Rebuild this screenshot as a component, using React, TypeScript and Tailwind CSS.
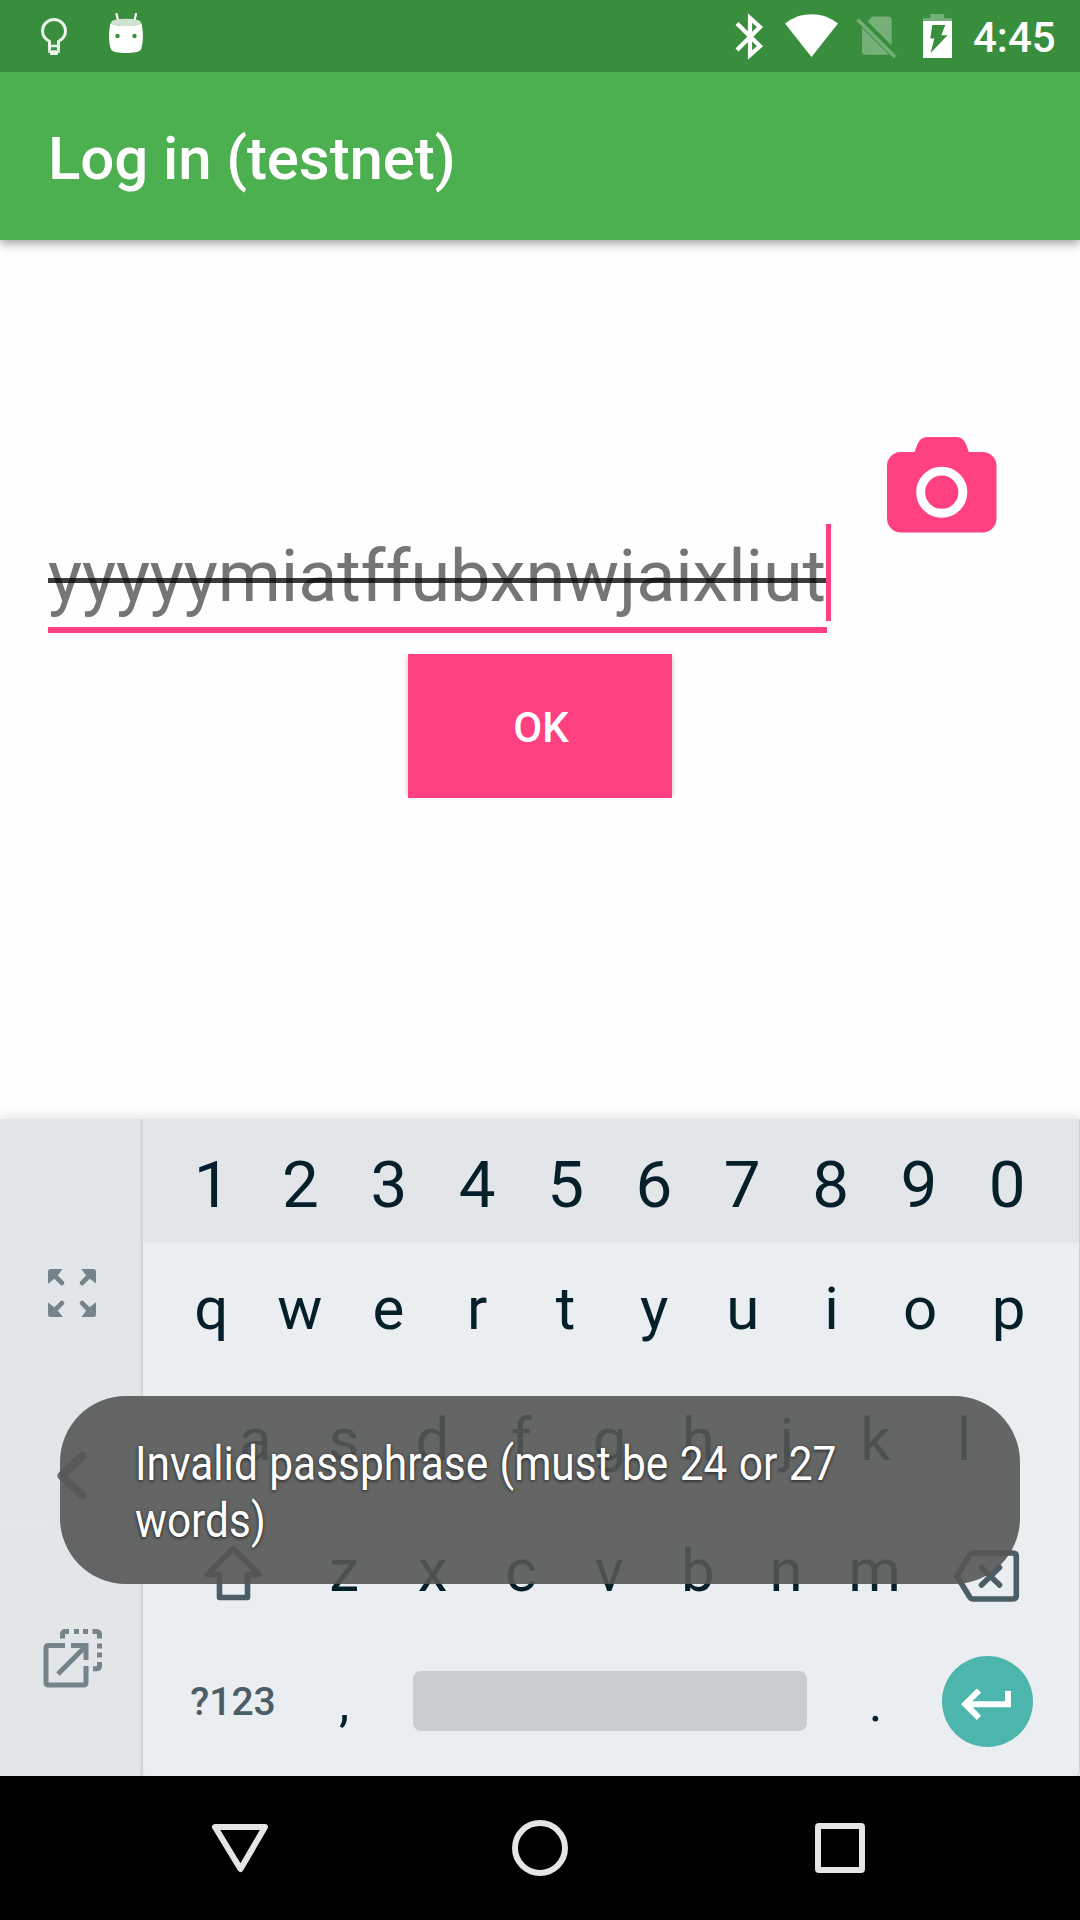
import React from "react";

const NUMBERS = "1234567890".split("");
const TOP = "qwertyuiop".split("");
const HOME = "asdfghjkl".split("");
const BOTTOM = "zxcvbnm".split("");

function StatusBar() {
  return (
    <div className="flex h-[72px] items-start bg-[#388e3c]">
      <svg className="ml-[36px] h-[72px] w-[36px]" viewBox="36 0 36 72" fill="none">
        <path d="M49.500 50V41.500C45 39 42.500 35.500 42.500 31a11.500 11.500 0 0 1 23 0c0 4.500-2.500 8-7 10.500V50" stroke="#e8f2e8" strokeWidth="3" />
        <path d="M49 46h10M48 51.500h12" stroke="#e8f2e8" strokeWidth="2.600" />
        <path d="M50 51h8v4h-8z" fill="#e8f2e8" />
      </svg>
      <svg className="ml-[32px] h-[72px] w-[44px]" viewBox="104 0 44 72">
        <path d="M116.500 14l2 8M136 14l-2 8" stroke="#fff" strokeWidth="2.200" strokeLinecap="round" />
        <path d="M110.500 23C114 27 138 27 141.500 23C143.500 32 143.500 42 141 49.500C139 54.200 113 54.200 111 49.500C108.500 42 108.500 32 110.500 23z" fill="#fff" />
        <ellipse cx="126" cy="22.500" rx="15" ry="3.800" fill="#cfe3d0" />
        <circle cx="117.500" cy="36" r="2.200" fill="#388e3c" />
        <circle cx="134.500" cy="36" r="2.200" fill="#388e3c" />
      </svg>
      <svg className="ml-auto h-[72px] w-[32px]" viewBox="733 0 32 72" fill="none">
        <path d="M737 23.500L760 46.200L750 55V18L760 27L737 50" stroke="#fff" strokeWidth="4.200" strokeMiterlimit="3" />
      </svg>
      <svg className="ml-[18px] h-[72px] w-[58px]" viewBox="783 0 58 72">
        <path d="M811.500 57L785 23.500C800 11 823 11 838 23.500z" fill="#fff" />
      </svg>
      <svg className="ml-[12px] h-[72px] w-[46px]" viewBox="853 0 46 72" fill="#76b079">
        <path d="M867.500 21.500L872.500 16.500H888.500Q891.700 16.500 891.700 20V45.500z" />
        <path d="M862 27.500V51.500Q862 54.700 865.500 54.700H889.300z" />
        <path d="M857.500 19.500L895 57" stroke="#76b079" strokeWidth="3.400" />
      </svg>
      <svg className="ml-[21px] h-[72px] w-[35px]" viewBox="920 0 35 72">
        <path d="M930.300 14h14v4.300h7.700v3H923v-3h7.300z" fill="#76b079" />
        <path d="M923 21h29v37h-29z" fill="#fff" />
        <path d="M932.300 25h13l-4 10.200h6.200L930.600 53l3.700-14.500h-4z" fill="#388e3c" />
      </svg>
      <span className="ml-[18px] mr-[23px] w-[84px] pt-[2px] text-[42px] font-medium leading-[72px] text-white">4:45</span>
    </div>
  );
}

function Keys({ keys, className }: { keys: string[]; className: string }) {
  return (
    <>
      {keys.map((k) => (
        <span key={k} className={`text-center ${className}`}>{k}</span>
      ))}
    </>
  );
}

function SidePanel() {
  return (
    <div className="flex h-full w-[143px] flex-col items-start bg-gradient-to-r from-[#e2e6e9] from-97% to-[#cdd1d4]">
      <svg className="ml-[48px] mt-[150px] size-[48px]" viewBox="0 0 48 48">
        {[0, 90, 180, 270].map((r) => (
          <g key={r} transform={`rotate(${r} 24 24)`} fill="#75838a" stroke="#75838a">
            <path d="M2.500 0H14.500L10.300 5.700L5.500 10.500L0 14.800V2.500Q0 0 2.500 0z" stroke="none" />
            <path d="M5 5L13.900 13.900" strokeWidth="4.800" strokeLinecap="round" />
          </g>
        ))}
      </svg>
      <svg className="ml-[52px] mt-[129px] h-[58px] w-[38px]" viewBox="52 1446 38 58" fill="none">
        <path d="M82 1456L61.500 1475.700L82 1495" stroke="#62727a" strokeWidth="8.500" strokeLinecap="round" strokeLinejoin="round" />
      </svg>
      <svg className="ml-[43px] mt-[125px] size-[60px]" viewBox="0 0 60 60" fill="none" stroke="#75838a" strokeWidth="5">
        <path d="M22 16.500H5.500Q3 16.500 3 19V53.500Q3 56 5.500 56H40.500Q43 56 43 53.500V37" />
        <path d="M28 16.500H43V31" />
        <path d="M15 45L43 17" />
        <path d="M19.500 9.500V5.500Q19.500 2.500 22.500 2.500H26M31 2.500h5M40 2.500h5M49.500 2.500H53Q56.500 2.500 56.500 5.500V9.500M56.500 14.500v5M56.500 23.500v5M56.500 33V37Q56.500 39.800 53.500 39.800H50" />
      </svg>
    </div>
  );
}

function Keyboard() {
  return (
    <div className="flex h-[657px] bg-[#e2e6e9] shadow-[0_-2px_12px_rgba(0,0,0,0.12)]">
      <SidePanel />
      <div className="mr-px flex w-[936px] flex-col rounded-b-md bg-[#eaeef1] text-[60px] text-[#051f2b] shadow-[1px_0_0_#ced2d5]">
        <div className="flex h-[124px] bg-[#e2e6e9] pl-[25px] pt-[4px] text-[65.5px] leading-[124px]">
          <Keys keys={NUMBERS} className="w-[88.35px]" />
        </div>
        <div className="flex h-[131px] pl-[24px] pt-px leading-[130px]">
          <Keys keys={TOP} className="w-[88.6px]" />
        </div>
        <div className="flex h-[131px] pl-[68px] leading-[131px]">
          <Keys keys={HOME} className="w-[88.600px]" />
        </div>
        <div className="flex h-[131px] pl-[26px] leading-[132px]">
          <svg className="h-[131px] w-[131px]" viewBox="169 1505 131 131" fill="none">
            <path d="M233.300 1548.500L207.300 1574.500H219.500V1597.500H247.500V1574.500H259.300z" stroke="#4b5d66" strokeWidth="5.600" strokeLinejoin="round" />
          </svg>
          <Keys keys={BOTTOM} className="w-[88.4px]" />
          <svg className="h-[131px] w-[133px]" viewBox="919 1505 133 131" fill="none" stroke="#4b5d66" strokeWidth="5.600" strokeLinejoin="round" strokeLinecap="round">
            <path d="M973 1553H1012.500Q1016.300 1553 1016.300 1556.500V1595.500Q1016.300 1599 1012.500 1599H973Q971 1599 970 1597.500L956.800 1576L970 1554.500Q971 1553 973 1553z" />
            <path d="M981.500 1567.500L999.500 1585M999.500 1567.500L981.500 1585" />
          </svg>
        </div>
        <div className="flex h-[130px] items-center pl-[26px] leading-[129px]">
          <span className="w-[128px] pt-[3px] text-center text-[39px] font-medium text-[#4b5d66]">?123</span>
          <span className="ml-[3px] w-[88.4px] pt-[5px] text-center text-[52px]">,</span>
          <div className="ml-[25px] mr-[24px] h-[60px] w-[394px] rounded-lg bg-[#c9cdd0]" />
          <span className="w-[88.4px] pt-[5px] text-center text-[52px]">.</span>
          <div className="ml-[22px] size-[91px] rounded-full bg-[#4db6ac]">
            <svg className="size-[91px]" viewBox="942 1655 91 91" fill="none" stroke="#fff" strokeWidth="6">
              <path d="M1008 1690V1703.200H966M979 1689.500L965.300 1703.200L979 1716.900" />
            </svg>
          </div>
        </div>
      </div>
    </div>
  );
}

export default function App() {
  return (
    <div className="relative flex h-[1920px] w-[1080px] flex-col overflow-hidden bg-[#fefefe] font-['Roboto',sans-serif]">
      <div className="z-10 shadow-[0_3px_10px_rgba(0,0,0,0.4)]">
        <StatusBar />
        <div className="h-[168px] bg-[#4caf50] pl-[48px] pt-[3px] text-[60px] font-medium leading-[168px] tracking-[-0.1px] text-white">
          Log in (testnet)
        </div>
      </div>

      <div className="flex h-[879px] flex-col px-[48px]">
        <div className="flex h-[393px]">
          <div className="relative mt-[284px] h-[109px] w-[779px] border-b-[6px] border-[#ff4081]">
            <div className="whitespace-nowrap text-[72px] leading-[105px] tracking-[-0.12px] text-[#757575]">yyyyymiatffubxnwjaixliut</div>
            <div className="absolute left-0 top-[54px] h-[4.500px] w-full bg-black/77" />
            <div className="absolute -right-[4px] top-0 h-[97px] w-[5px] bg-[#ff4081]" />
          </div>
          <svg className="ml-[60px] mt-[197px] h-[95.500px] w-[109.500px]" viewBox="887 437 110 96" preserveAspectRatio="none">
            <path d="M901 452H914.700L917.500 444.500Q920.500 437 927.500 437H956.500Q963.500 437 966.500 444.500L969.200 452H983A14 14 0 0 1 997 466V519A14 14 0 0 1 983 533H901A14 14 0 0 1 887 519V466A14 14 0 0 1 901 452z" fill="#ff4081" />
            <circle cx="942" cy="492.500" r="21.200" fill="none" stroke="#fff" strokeWidth="9" />
          </svg>
        </div>
        <button className="mt-[21px] h-[144px] w-[264px] self-center bg-[#ff4081] pl-[2px] pt-[3px] text-[42px] font-medium leading-none text-white shadow-[-3px_0_4px_-2px_rgba(0,0,0,0.2),3px_0_4px_-2px_rgba(0,0,0,0.2)]">OK</button>
      </div>

      <Keyboard />

      <div className="flex h-[144px] items-center bg-black">
        <svg className="ml-[210px] size-[60px]" viewBox="210 1818 60 60" fill="none">
          <path d="M215 1827H265L240.500 1869z" stroke="#e5e5e5" strokeWidth="6" strokeLinejoin="round" />
        </svg>
        <div className="ml-[242px] size-[56px] rounded-full border-[6px] border-[#e5e5e5]" />
        <div className="ml-[247px] size-[50px] rounded-[4px] border-[6px] border-[#e5e5e5]" />
      </div>

      <div className="absolute left-[60px] top-[1396px] z-20 h-[188px] w-[960px] rounded-[66px] bg-[#555555]/90 pl-[75px] pt-[39px]">
        <div className="w-[830px] origin-left scale-x-[0.884] whitespace-nowrap text-[48px] leading-[57px] text-white [text-shadow:0_1px_4px_rgba(0,0,0,0.75)] [word-spacing:1px]">
          Invalid passphrase (must be 24 or 27
          <br />
          words)
        </div>
      </div>
    </div>
  );
}
